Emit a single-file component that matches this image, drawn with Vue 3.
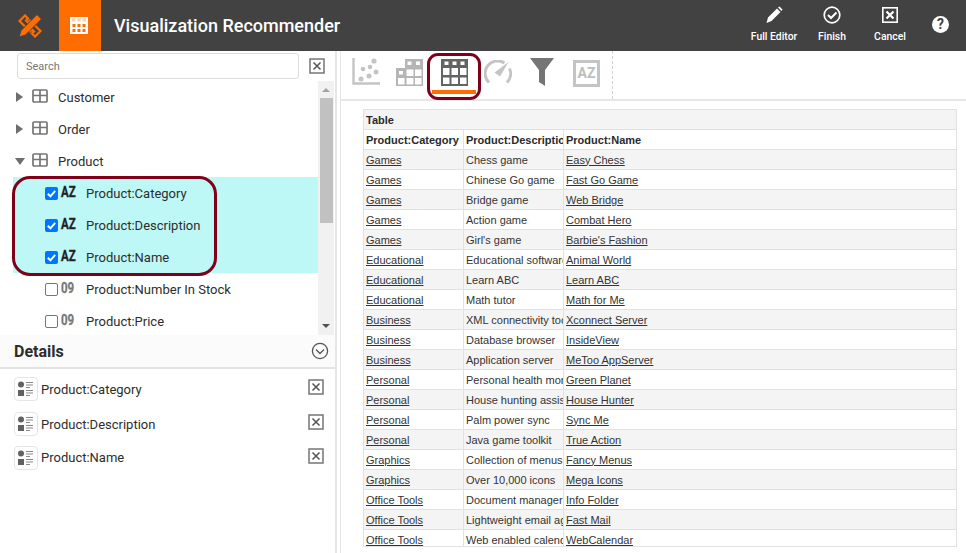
<template>
  <div class="app">
    <header class="topbar">
      <div class="logo">
        <svg width="24" height="24" viewBox="0 0 24 24">
          <path d="M1.500 7 L7 1.500 L10 4.500 L8 6.500 L10 8.500 L12 6.500 L22.500 17 L17 22.500 L14 19.500 L16 17.500 L14 15.500 L12 17.500 Z" fill="none" stroke="#ff6d00" stroke-width="2.200" />
          <path d="M19 0.500 L23.500 5 L7.500 21 L1 23 L3 16.500 Z" fill="#ff6d00" stroke="#424242" stroke-width="1" />
        </svg>
      </div>
      <div class="tile">
        <svg width="18" height="17" viewBox="0 0 18 17">
          <rect width="18" height="17" fill="#fff" />
          <g fill="#ffcfa6"><rect x="2" y="1.500" width="3.500" height="3" /><rect x="7.200" y="1.500" width="3.500" height="3" /><rect x="12.500" y="1.500" width="3.500" height="3" /></g>
          <g fill="#ff6d00"><rect x="2.500" y="7" width="3" height="3" /><rect x="7.500" y="7" width="3" height="3" /><rect x="12.500" y="7" width="3" height="3" /><rect x="2.500" y="12" width="3" height="3" /><rect x="7.500" y="12" width="3" height="3" /><rect x="12.500" y="12" width="3" height="3" /></g>
        </svg>
      </div>
      <h1 class="title">Visualization Recommender</h1>
      <nav class="actions">
        <div class="action">
          <svg width="20" height="20" viewBox="0 0 20 20"><path d="M2.500 18 L4 12.500 L13 3.500 L16.500 7 L7.500 16 Z M14 2.500 L15.500 1.500 L18.500 4.500 L17.500 6 Z" fill="#fff" /></svg>
          <span>Full Editor</span>
        </div>
        <div class="action">
          <svg width="20" height="20" viewBox="0 0 20 20"><circle cx="10" cy="10" r="7.800" fill="none" stroke="#fff" stroke-width="1.700" /><path d="M6 10 L9 13 L14.500 7.500" fill="none" stroke="#fff" stroke-width="2" /></svg>
          <span>Finish</span>
        </div>
        <div class="action">
          <svg width="20" height="20" viewBox="0 0 20 20"><rect x="2.800" y="2.800" width="14.400" height="14.400" fill="none" stroke="#fff" stroke-width="1.600" /><path d="M6.500 6.500 L13.500 13.500 M13.500 6.500 L6.500 13.500" stroke="#fff" stroke-width="2.200" /></svg>
          <span>Cancel</span>
        </div>
        <div class="help">?</div>
      </nav>
    </header>

    <div class="body">
      <aside class="side">
        <div class="search-row">
          <input class="search" type="text" placeholder="Search" />
          <svg class="x-icon" width="16" height="16" viewBox="0 0 16 16"><rect x="1" y="1" width="14" height="14" fill="none" stroke="#757575" stroke-width="1.500" /><path d="M4.500 4.500 L11.500 11.500 M11.500 4.500 L4.500 11.500" stroke="#555" stroke-width="1.500" /></svg>
        </div>

        <div class="tree-wrap">
          <div class="tree">
            <div v-for="node in nodes" :key="node.name" class="node" :class="{ picked: node.checked }">
              <template v-if="node.table">
                <span class="caret" :class="{ open: node.open }"></span>
                <svg class="table-icon" width="16" height="14" viewBox="0 0 16 14">
                  <rect x="1" y="1" width="14" height="12" rx="1" fill="none" stroke="#757575" stroke-width="1.700" />
                  <path d="M1 6.500H15M8 1V13" stroke="#757575" stroke-width="1.700" />
                </svg>
                <span class="node-table-name">{{ node.name }}</span>
              </template>
              <template v-else>
                <span class="check" :class="{ on: node.checked }">
                  <svg v-if="node.checked" width="13" height="13" viewBox="0 0 13 13"><path d="M2.800 6.800 L5.400 9.300 L10.200 3.800" fill="none" stroke="#fff" stroke-width="2" /></svg>
                </span>
                <span class="kind" :class="{ num: node.kind === '09' }">{{ node.kind }}</span>
                <span class="field-name">{{ node.name }}</span>
              </template>
            </div>
          </div>
          <div class="scrollbar">
            <span class="arrow up"></span>
            <span class="thumb"></span>
            <span class="arrow down"></span>
          </div>
          <div class="mark-fields"></div>
        </div>

        <div class="details-head">
          <span>Details</span>
          <svg width="18" height="18" viewBox="0 0 18 18"><circle cx="9" cy="9" r="7.600" fill="none" stroke="#555" stroke-width="1.300" /><path d="M5 7.500 L9 11.500 L13 7.500" fill="none" stroke="#555" stroke-width="1.300" /></svg>
        </div>
        <div class="details">
          <div v-for="item in details" :key="item" class="detail">
            <span class="detail-icon">
              <svg width="18" height="16" viewBox="0 0 18 16">
                <circle cx="4" cy="3.500" r="3" fill="#616161" />
                <rect x="1" y="9" width="6" height="6" fill="#616161" />
                <path d="M9 1.500H16M9 4H16M9 6.500H13M9 9.500H16M9 12H16M9 14.500H13" stroke="#8a8a8a" stroke-width="1.200" />
              </svg>
            </span>
            <span class="detail-name">{{ item }}</span>
            <svg class="detail-x" width="16" height="16" viewBox="0 0 16 16"><rect x="1" y="1" width="14" height="14" fill="none" stroke="#757575" stroke-width="1.500" /><path d="M4.500 4.500 L11.500 11.500 M11.500 4.500 L4.500 11.500" stroke="#555" stroke-width="1.500" /></svg>
          </div>
        </div>
      </aside>

      <main class="main">
        <div class="toolbar">
          <div class="tools">
            <svg class="tool" width="28" height="27" viewBox="0 0 28 27">
              <path d="M1.500 0V25.500H28" fill="none" stroke="#c4c4c4" stroke-width="2.400" />
              <g fill="#c4c4c4"><circle cx="9" cy="21" r="2.500" /><circle cx="17" cy="18" r="2.500" /><circle cx="24" cy="14" r="2.500" /><circle cx="11" cy="11" r="2.300" /><circle cx="18" cy="9" r="2.300" /><circle cx="22" cy="3" r="2.600" /></g>
            </svg>
            <svg class="tool" width="27" height="27" viewBox="0 0 27 27">
              <path d="M0 9H9V0H27V27H0Z" fill="#b5b5b5" />
              <g fill="#fff"><rect x="11.500" y="2.500" width="4" height="3.500" /><rect x="20" y="2.500" width="4" height="3.500" /><rect x="3" y="12" width="4" height="3.500" /><rect x="10.500" y="10.500" width="7" height="6.500" /><rect x="19" y="10.500" width="6.500" height="6.500" /><rect x="2" y="19" width="6.500" height="6.500" /><rect x="10.500" y="19" width="7" height="6.500" /><rect x="19" y="19" width="6.500" height="6.500" /></g>
            </svg>
            <div class="tool-active">
              <svg width="27" height="27" viewBox="0 0 27 27">
                <rect width="27" height="27" fill="#636363" />
                <g fill="#fff"><rect x="3.500" y="2.500" width="4" height="3.500" /><rect x="11.500" y="2.500" width="4" height="3.500" /><rect x="19.500" y="2.500" width="4" height="3.500" /><rect x="2" y="9" width="6.500" height="7" /><rect x="10.500" y="9" width="6.500" height="7" /><rect x="19" y="9" width="6.500" height="7" /><rect x="2" y="18.500" width="6.500" height="6.500" /><rect x="10.500" y="18.500" width="6.500" height="6.500" /><rect x="19" y="18.500" width="6.500" height="6.500" /></g>
              </svg>
              <span class="underline"></span>
            </div>
            <svg class="tool gauge" width="28" height="24" viewBox="0 0 28 24">
              <path d="M5 22.500 A12.500 12.500 0 0 1 20.500 3" fill="none" stroke="#c4c4c4" stroke-width="3" />
              <path d="M25.500 8.500 A12.500 12.500 0 0 1 23 22.500" fill="none" stroke="#c4c4c4" stroke-width="3" />
              <path d="M24.500 2 L16 16.500 L10.500 12.500 Z" fill="#c4c4c4" />
            </svg>
            <svg class="tool funnel" width="24" height="28" viewBox="0 0 24 28">
              <path d="M0 0H24L15 12V28L9 24V12Z" fill="#757575" />
            </svg>
            <div class="tool-az">AZ</div>
          </div>
        </div>

        <div class="grid-wrap">
          <table class="grid">
            <colgroup><col class="c1" /><col class="c2" /><col /></colgroup>
            <thead>
              <tr class="caption-row"><th colspan="3">Table</th></tr>
              <tr class="head-row"><th>Product:Category</th><th>Product:Description</th><th>Product:Name</th></tr>
            </thead>
            <tbody>
              <tr v-for="row in rows" :key="row[2]">
                <td><a>{{ row[0] }}</a></td>
                <td>{{ row[1] }}</td>
                <td><a>{{ row[2] }}</a></td>
              </tr>
            </tbody>
          </table>
        </div>
        <div class="mark-tool"></div>
      </main>
    </div>
  </div>
</template>

<script setup>
const nodes = [
  { name: 'Customer', table: true },
  { name: 'Order', table: true },
  { name: 'Product', table: true, open: true },
  { name: 'Product:Category', kind: 'AZ', checked: true },
  { name: 'Product:Description', kind: 'AZ', checked: true },
  { name: 'Product:Name', kind: 'AZ', checked: true },
  { name: 'Product:Number In Stock', kind: '09' },
  { name: 'Product:Price', kind: '09' }
]

const details = ['Product:Category', 'Product:Description', 'Product:Name']

const rows = [
  ['Games', 'Chess game', 'Easy Chess'],
  ['Games', 'Chinese Go game', 'Fast Go Game'],
  ['Games', 'Bridge game', 'Web Bridge'],
  ['Games', 'Action game', 'Combat Hero'],
  ['Games', "Girl's game", "Barbie's Fashion"],
  ['Educational', 'Educational software', 'Animal World'],
  ['Educational', 'Learn ABC', 'Learn ABC'],
  ['Educational', 'Math tutor', 'Math for Me'],
  ['Business', 'XML connectivity tool', 'Xconnect Server'],
  ['Business', 'Database browser', 'InsideView'],
  ['Business', 'Application server', 'MeToo AppServer'],
  ['Personal', 'Personal health monitor', 'Green Planet'],
  ['Personal', 'House hunting assistant', 'House Hunter'],
  ['Personal', 'Palm power sync', 'Sync Me'],
  ['Personal', 'Java game toolkit', 'True Action'],
  ['Graphics', 'Collection of menus', 'Fancy Menus'],
  ['Graphics', 'Over 10,000 icons', 'Mega Icons'],
  ['Office Tools', 'Document manager', 'Info Folder'],
  ['Office Tools', 'Lightweight email agent', 'Fast Mail'],
  ['Office Tools', 'Web enabled calendar', 'WebCalendar']
]
</script>

<style>
html, body {
  margin: 0;
  overflow: hidden;
  background: #fff;
}
</style>

<style scoped>
.app {
  width: 966px;
  height: 553px;
  overflow: hidden;
  display: flex;
  flex-direction: column;
  font-family: Roboto, sans-serif;
  color: #2d2d2d;
}

.topbar {
  height: 51px;
  flex: none;
  display: flex;
  align-items: center;
  background: #424242;
}

.logo {
  width: 59px;
  display: flex;
  justify-content: center;
}

.tile {
  width: 42px;
  height: 51px;
  box-sizing: border-box;
  padding-right: 2px;
  display: flex;
  align-items: center;
  justify-content: center;
  background: #ff6d00;
}

.title {
  margin: 0 0 0 13px;
  font-size: 18px;
  font-weight: 500;
  color: #fff;
}

.actions {
  margin-left: auto;
  align-self: flex-start;
  display: flex;
  align-items: flex-start;
  padding: 5px 17px 0 0;
}

.action {
  width: 58px;
  display: flex;
  flex-direction: column;
  align-items: center;
  gap: 5px;
  color: #fff;
  font-size: 10.400px;
  font-weight: 500;
  position: relative;
  left: 3px;
}

.help {
  width: 17px;
  height: 17px;
  margin: 11px 0 0 16px;
  border-radius: 50%;
  background: #fff;
  color: #424242;
  font-size: 14px;
  font-weight: 700;
  line-height: 17px;
  text-align: center;
}

.body {
  flex: 1;
  min-height: 0;
  display: flex;
}

.side {
  width: 335px;
  flex: none;
  display: flex;
  flex-direction: column;
  border-right: 2px solid #e6e6e6;
}

.search-row {
  height: 30px;
  display: flex;
  align-items: center;
  padding-left: 17px;
}

.search {
  width: 282px;
  height: 26px;
  box-sizing: border-box;
  padding: 0 8px;
  border: 1px solid #ddd;
  border-radius: 3px;
  outline: none;
  font-family: Roboto, sans-serif;
  font-size: 11px;
}

.search::placeholder {
  color: #777;
}

.x-icon {
  margin-left: 10px;
}

.tree-wrap {
  position: relative;
  height: 254px;
  flex: none;
  overflow: hidden;
  display: flex;
  padding-left: 13px;
}

.tree {
  width: 305px;
}

.node {
  height: 32px;
  display: flex;
  align-items: center;
  font-size: 13px;
}

.node.picked {
  background: #bdf8f6;
}

.caret {
  width: 0;
  height: 0;
  margin-left: 3px;
  border-style: solid;
  border-width: 5px 0 5px 7px;
  border-color: transparent transparent transparent #6f6f6f;
}

.caret.open {
  margin-left: 2px;
  border-width: 7px 5px 0;
  border-color: #6f6f6f transparent transparent;
}

.table-icon {
  margin: -3px 0 0 9px;
}

.node-table-name {
  margin-left: 10px;
}

.caret.open ~ .table-icon {
  margin-left: 7px;
}

.check {
  width: 13px;
  height: 13px;
  margin-left: 32px;
  box-sizing: border-box;
  border: 1px solid #767676;
  border-radius: 2px;
  background: #fff;
}

.check.on {
  border: 0;
  background: #0075ff;
}

.check svg {
  display: block;
}

.kind {
  width: 14px;
  margin-left: 3px;
  font-size: 15.500px;
  font-weight: 700;
  line-height: 13px;
  color: #222;
  white-space: nowrap;
  -webkit-text-stroke: 0.3px currentColor;
  transform: translateY(-1px) scaleX(0.74);
  transform-origin: left center;
}

.kind.num {
  color: #777;
}

.field-name {
  margin-left: 11px;
}

.scrollbar {
  width: 16px;
  display: flex;
  flex-direction: column;
  align-items: center;
  background: #f1f1f1;
}

.thumb {
  width: 13px;
  height: 125px;
  margin-top: 6px;
  background: #c1c1c1;
}

.arrow {
  width: 0;
  height: 0;
  border-style: solid;
  border-width: 0 4px 4px;
  border-color: transparent transparent #a3a3a3;
  margin-top: 7px;
}

.arrow.down {
  margin-top: auto;
  margin-bottom: 7px;
  border-width: 4px 4px 0;
  border-color: #505050 transparent transparent;
}

.mark-fields {
  position: absolute;
  left: 12px;
  top: 95px;
  width: 205px;
  height: 100px;
  box-sizing: border-box;
  border: 3px solid #7f0019;
  border-radius: 18px;
}

.details-head {
  height: 32px;
  flex: none;
  display: flex;
  align-items: center;
  justify-content: space-between;
  padding: 0 6px 0 14px;
  background: #fbfbfb;
  border-bottom: 2px solid #e3e3e3;
  font-size: 16px;
  font-weight: 700;
}

.details {
  padding-top: 3px;
}

.detail {
  height: 34.500px;
  display: flex;
  align-items: center;
  padding-left: 14px;
  font-size: 13px;
}

.detail:nth-child(2) {
  height: 34px;
  padding-top: 1px;
  box-sizing: border-box;
}

.detail-icon {
  width: 24px;
  height: 24px;
  flex: none;
  box-sizing: border-box;
  display: flex;
  align-items: center;
  justify-content: center;
  border: 1px solid #e6e6e6;
  border-radius: 4px;
}

.detail-name {
  margin-left: 3px;
}

.detail-x {
  margin: -4px 11px 0 auto;
}

.main {
  position: relative;
  flex: 1;
  min-width: 0;
  margin-left: 3px;
  border-left: 1px solid #e6e6e6;
}

.toolbar {
  height: 48px;
  border-bottom: 2px solid #e6e6e6;
}

.tools {
  width: 272px;
  height: 48px;
  box-sizing: border-box;
  display: flex;
  align-items: flex-start;
  padding: 7px 0 0 11px;
  border-right: 1px dashed #d0d0d0;
}

.tool {
  flex: none;
}

.tool:nth-child(2) {
  margin: 1px 0 0 16px;
}

.gauge {
  margin: 2px 0 0 8px;
}

.funnel {
  margin-left: 18px;
}

.tool-active {
  width: 44px;
  height: 36px;
  flex: none;
  margin: 1px 0 0 9px;
  position: relative;
  display: flex;
  flex-direction: column;
  align-items: center;
}

.underline {
  position: absolute;
  left: 0;
  right: 0;
  top: 31px;
  height: 4px;
  background: #ff6d00;
}

.tool-az {
  width: 27px;
  height: 27px;
  flex: none;
  box-sizing: border-box;
  margin: 2px 0 0 19px;
  border: 3px solid #c4c4c4;
  color: #bdbdbd;
  font-size: 14px;
  font-weight: 700;
  line-height: 21px;
  text-align: center;
}

.mark-tool {
  position: absolute;
  left: 86px;
  top: 2px;
  width: 54px;
  height: 47px;
  box-sizing: border-box;
  border: 3px solid #7f0019;
  border-radius: 11px;
}

.grid-wrap {
  padding: 8px 9px 0 22px;
}

.grid {
  width: 594px;
  border-collapse: collapse;
  table-layout: fixed;
  font-family: "Liberation Sans", Arial, sans-serif;
  font-size: 11px;
  color: #333;
  border: 1px solid #dedede;
}

.c1 {
  width: 100px;
}

.c2 {
  width: 100px;
}

.grid th,
.grid td {
  height: 19px;
  padding: 0 2px;
  box-sizing: content-box;
  border: 1px solid #e2e2e2;
  text-align: left;
  white-space: nowrap;
  overflow: hidden;
}

.grid tbody tr:last-child td {
  height: 16px;
  vertical-align: bottom;
}

.grid th {
  font-weight: 700;
  color: #2a2a2a;
}

.caption-row th {
  background: #f4f4f4;
}

.grid tbody tr:nth-child(odd) td {
  background: #f4f4f4;
}

.grid a {
  color: #333;
  text-decoration: underline;
}
</style>
